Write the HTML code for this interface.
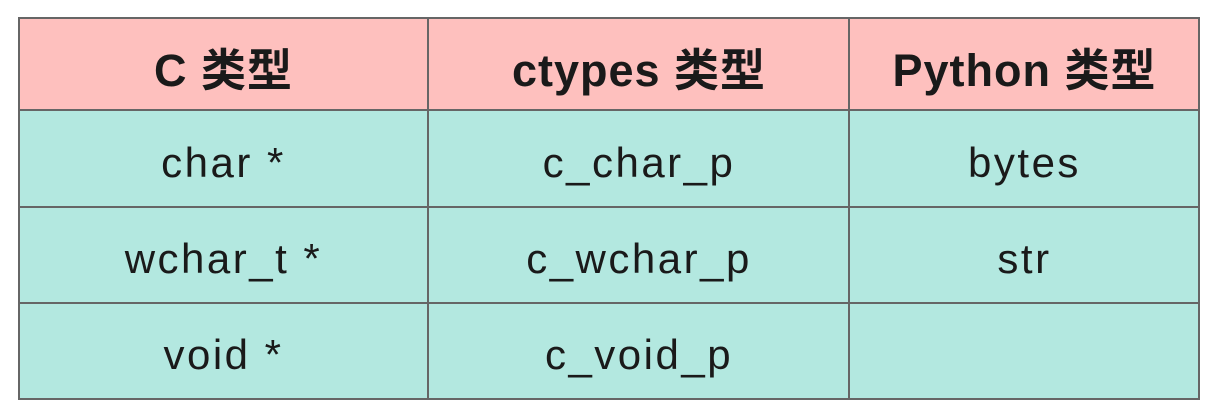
<!DOCTYPE html>
<html><head><style>
body{margin:0;width:1216px;height:414px;background:#fff;position:relative;overflow:hidden;font-family:"Comic Sans MS","Liberation Sans","Noto Sans CJK SC",sans-serif;color:#1a1a1a}
.c{position:absolute;display:flex;align-items:center;justify-content:center;font-size:42px;letter-spacing:2.5px;box-sizing:border-box;padding-top:8px}
.h{background:#fec0be;font-weight:bold;font-size:45px;letter-spacing:1px;padding-top:4px}
.b{background:#b3e8e0}
.l{position:absolute;background:#666}
</style></head><body>
<div class="c h" style="left:19px;top:18px;width:409px;height:92px">C 类型</div>
<div class="c h" style="left:428px;top:18px;width:422px;height:92px">ctypes 类型</div>
<div class="c h" style="left:850px;top:18px;width:349px;height:92px">Python 类型</div>
<div class="c b" style="left:19px;top:110px;width:409px;height:97px">char *</div>
<div class="c b" style="left:428px;top:110px;width:422px;height:97px">c_char_p</div>
<div class="c b" style="left:850px;top:110px;width:349px;height:97px">bytes</div>
<div class="c b" style="left:19px;top:207px;width:409px;height:96px">wchar_t *</div>
<div class="c b" style="left:428px;top:207px;width:422px;height:96px">c_wchar_p</div>
<div class="c b" style="left:850px;top:207px;width:349px;height:96px">str</div>
<div class="c b" style="left:19px;top:303px;width:409px;height:96px">void *</div>
<div class="c b" style="left:428px;top:303px;width:422px;height:96px">c_void_p</div>
<div class="c b" style="left:850px;top:303px;width:349px;height:96px"></div>
<div class="l" style="left:18px;top:17px;width:1182px;height:2px"></div>
<div class="l" style="left:18px;top:109px;width:1182px;height:2px"></div>
<div class="l" style="left:18px;top:206px;width:1182px;height:2px"></div>
<div class="l" style="left:18px;top:302px;width:1182px;height:2px"></div>
<div class="l" style="left:18px;top:398px;width:1182px;height:2px"></div>
<div class="l" style="left:18px;top:17px;width:2px;height:383px"></div>
<div class="l" style="left:427px;top:17px;width:2px;height:383px"></div>
<div class="l" style="left:848px;top:17px;width:2px;height:383px"></div>
<div class="l" style="left:1198px;top:17px;width:2px;height:383px"></div>
</body></html>
